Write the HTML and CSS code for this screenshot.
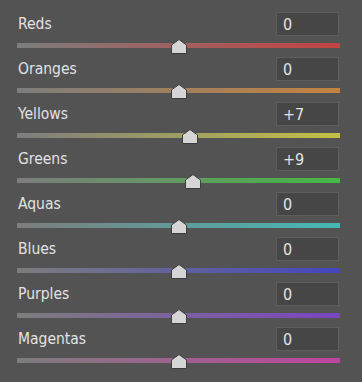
FILE: index.html
```html
<!DOCTYPE html>
<html lang="en">
<head>
    <meta charset="UTF-8">
    <title>HSL Saturation</title>
    <link rel="stylesheet" href="styles.css">
</head>
<body>
    <div class="panel">
        <!-- Reds -->
        <div class="row">
            <div class="head">
                <span class="label">Reds</span>
                <div class="value">0</div>
            </div>
            <div class="track reds">
                <div class="thumb" style="left: 50%"><svg width="16" height="15" viewBox="0 0 16 15"><polygon points="8,0.5 15.5,6 15.5,14.5 0.5,14.5 0.5,6" /></svg></div>
            </div>
        </div>
        <!-- Oranges -->
        <div class="row">
            <div class="head">
                <span class="label">Oranges</span>
                <div class="value">0</div>
            </div>
            <div class="track oranges">
                <div class="thumb" style="left: 50%"><svg width="16" height="15" viewBox="0 0 16 15"><polygon points="8,0.5 15.5,6 15.5,14.5 0.5,14.5 0.5,6" /></svg></div>
            </div>
        </div>
        <!-- Yellows -->
        <div class="row">
            <div class="head">
                <span class="label">Yellows</span>
                <div class="value">+7</div>
            </div>
            <div class="track yellows">
                <div class="thumb" style="left: 53.5%"><svg width="16" height="15" viewBox="0 0 16 15"><polygon points="8,0.5 15.5,6 15.5,14.5 0.5,14.5 0.5,6" /></svg></div>
            </div>
        </div>
        <!-- Greens -->
        <div class="row">
            <div class="head">
                <span class="label">Greens</span>
                <div class="value">+9</div>
            </div>
            <div class="track greens">
                <div class="thumb" style="left: 54.5%"><svg width="16" height="15" viewBox="0 0 16 15"><polygon points="8,0.5 15.5,6 15.5,14.5 0.5,14.5 0.5,6" /></svg></div>
            </div>
        </div>
        <!-- Aquas -->
        <div class="row">
            <div class="head">
                <span class="label">Aquas</span>
                <div class="value">0</div>
            </div>
            <div class="track aquas">
                <div class="thumb" style="left: 50%"><svg width="16" height="15" viewBox="0 0 16 15"><polygon points="8,0.5 15.5,6 15.5,14.5 0.5,14.5 0.5,6" /></svg></div>
            </div>
        </div>
        <!-- Blues -->
        <div class="row">
            <div class="head">
                <span class="label">Blues</span>
                <div class="value">0</div>
            </div>
            <div class="track blues">
                <div class="thumb" style="left: 50%"><svg width="16" height="15" viewBox="0 0 16 15"><polygon points="8,0.5 15.5,6 15.5,14.5 0.5,14.5 0.5,6" /></svg></div>
            </div>
        </div>
        <!-- Purples -->
        <div class="row">
            <div class="head">
                <span class="label">Purples</span>
                <div class="value">0</div>
            </div>
            <div class="track purples">
                <div class="thumb" style="left: 50%"><svg width="16" height="15" viewBox="0 0 16 15"><polygon points="8,0.5 15.5,6 15.5,14.5 0.5,14.5 0.5,6" /></svg></div>
            </div>
        </div>
        <!-- Magentas -->
        <div class="row">
            <div class="head">
                <span class="label">Magentas</span>
                <div class="value">0</div>
            </div>
            <div class="track magentas">
                <div class="thumb" style="left: 50%"><svg width="16" height="15" viewBox="0 0 16 15"><polygon points="8,0.5 15.5,6 15.5,14.5 0.5,14.5 0.5,6" /></svg></div>
            </div>
        </div>
    </div>
</body>
</html>
```

FILE: styles.css
```css
html, body {
    background: #535353;
}
body {
    margin: 0;
    padding: 12px 22px 0 17px;
    color: #e2e2e2;
    font-family: "DejaVu Sans Condensed", "DejaVu Sans", Tahoma, sans-serif;
    font-stretch: condensed;
}
.row {
    height: 45px;
}
.head {
    display: flex;
    justify-content: space-between;
    align-items: center;
    height: 24px;
    padding: 0 1px 0 1px;
}
.label {
    font-size: 15.5px;
}
.value {
    box-sizing: border-box;
    width: 63px;
    height: 24px;
    padding: 2px 0 0 6px;
    background: #464646;
    border: 1px solid #5e5e5e;
    font-size: 16px;
    line-height: 20px;
}
.track {
    position: relative;
    height: 5px;
    margin-top: 7px;
}
.thumb {
    position: absolute;
    top: -4px;
    width: 16px;
    height: 15px;
    margin-left: -8px;
}
.thumb svg {
    display: block;
}
.thumb polygon {
    fill: #d5d5d5;
    stroke: #3c3c3c;
    stroke-width: 1;
}
.reds { background: linear-gradient(to right, #7d7d7d, #c44343); }
.oranges { background: linear-gradient(to right, #7d7d7d, #c4833f); }
.yellows { background: linear-gradient(to right, #7d7d7d, #c3c045); }
.greens { background: linear-gradient(to right, #7d7d7d, #45b845); }
.aquas { background: linear-gradient(to right, #7d7d7d, #45b8b5); }
.blues { background: linear-gradient(to right, #7d7d7d, #4545c0); }
.purples { background: linear-gradient(to right, #7d7d7d, #7b45c0); }
.magentas { background: linear-gradient(to right, #7d7d7d, #c045a0); }
```
